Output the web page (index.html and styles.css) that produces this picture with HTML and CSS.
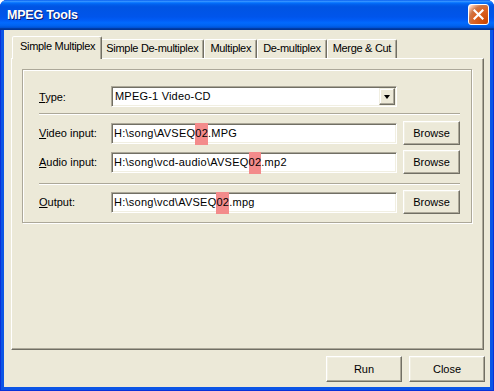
FILE: index.html
```html
<!DOCTYPE html>
<html lang="en">
<head>
    <meta charset="UTF-8">
    <title>MPEG Tools</title>
    <link rel="stylesheet" href="styles.css">
</head>
<body>
    <div class="window">
        <div class="titlebar">
            <span class="title">MPEG Tools</span>
            <span class="close-btn">
                <svg width="11" height="11" viewBox="0 0 11 11">
                    <path d="M1.5 1.5 L9.5 9.5 M9.5 1.5 L1.5 9.5" stroke="#fff" stroke-width="2.2" stroke-linecap="square"/>
                </svg>
            </span>
        </div>

        <div class="client">
            <div class="tabs">
                <div class="tab active">Simple Multiplex</div>
                <div class="tab">Simple De-multiplex</div>
                <div class="tab">Multiplex</div>
                <div class="tab">De-multiplex</div>
                <div class="tab">Merge &amp; Cut</div>
            </div>

            <div class="panel">
                <div class="group">
                    <label class="lbl"><u>T</u>ype:</label>
                    <div class="combo">
                        <span class="combo-text">MPEG-1 Video-CD</span>
                        <span class="drop-btn"><span class="arrow"></span></span>
                    </div>

                    <div class="sep sep-top"></div>

                    <label class="lbl"><u>V</u>ideo input:</label>
                    <div class="field">H:\song\AVSEQ<span class="hl">02</span>.MPG</div>
                    <button class="btn">Browse</button>

                    <label class="lbl row-gap"><u>A</u>udio input:</label>
                    <div class="field row-gap">H:\song\vcd-audio\AVSEQ<span class="hl">02</span>.mp2</div>
                    <button class="btn row-gap">Browse</button>

                    <div class="sep sep-bottom"></div>

                    <label class="lbl"><u>O</u>utput:</label>
                    <div class="field">H:\song\vcd\AVSEQ<span class="hl">02</span>.mpg</div>
                    <button class="btn">Browse</button>
                </div>
            </div>

            <div class="footer">
                <button class="btn btn-wide">Run</button>
                <button class="btn btn-wide">Close</button>
            </div>
        </div>
    </div>
</body>
</html>
```

FILE: styles.css
```css
* { box-sizing: border-box; }
body { margin: 0; background: #fff; font-family: "Liberation Sans", Arial, sans-serif; font-size: 11px; color: #000; }

.window { width: 494px; height: 391px; display: flex; flex-direction: column; background: #0B55E6; border-radius: 7px 7px 0 0; overflow: hidden; box-shadow: inset 1px 0 #0831D9, inset -1px 0 #0831D9, inset 0 -1px #0831D9; }

.titlebar { height: 30px; flex: none; display: flex; align-items: center; justify-content: space-between; padding: 0 5px 1px 7px;
    background: linear-gradient(to bottom, #0058EE 0%, #3A93FF 4%, #288EFF 6%, #127DFF 8%, #036FFC 10%, #0262EE 14%, #0057E5 20%, #0054E3 24%, #0055EB 56%, #005BF5 66%, #026AFE 76%, #0062EF 86%, #0052D6 92%, #0040AB 94%, #003092 100%); }
.title { color: #fff; font-size: 12.5px; font-weight: bold; letter-spacing: -0.2px; text-shadow: 1px 1px 0 #0A1A6E; }
.close-btn { width: 21px; height: 21px; border: 1px solid #fff; border-radius: 3px; display: flex; align-items: center; justify-content: center;
    background: radial-gradient(circle at 90% 90%, #CC4600 0%, #DC6527 55%, #CD7546 70%, #FFCCB2 90%, #fff 100%); }

.client { flex: 1; margin: 0 4px 4px 4px; background: #ECE9D8; display: flex; flex-direction: column; padding: 6px 5px 5px 7px; }

.tabs { display: flex; align-items: flex-end; height: 22px; padding-left: 2px; }
.tab { height: 19px; padding: 0 5px; line-height: 17px; letter-spacing: -0.3px; white-space: nowrap; border: 1px solid; border-bottom: 0; border-color: #fff #716F64 transparent #fff; box-shadow: inset -1px 0 #ACA899; border-radius: 2px 2px 0 0; }
.tab.active { height: 23px; margin: 0 -2px -1px -1px; padding: 0 6px 0 7px; line-height: 19px; position: relative; z-index: 1; background: #ECE9D8; }

.panel { flex: 1; margin-right: 1px; padding: 10px 11px 0 10px; border: 1px solid; border-color: #fff #716F64 #716F64 #fff; box-shadow: inset -1px -1px #ACA899; }

.group { display: grid; grid-template-columns: 66px 286px 57px; column-gap: 6px; align-items: center; padding: 16px 11px 8px 16px; border: 1px solid #ACA899; box-shadow: inset 1px 1px #fff, 1px 1px #fff; }

.lbl { white-space: nowrap; }
.lbl u { text-decoration-thickness: 1px; text-underline-offset: 1px; }

.combo { grid-column: 2 / 4; width: 286px; height: 21px; display: flex; align-items: stretch; background: #fff; border: 1px solid; border-color: #ACA899 #fff #fff #ACA899; box-shadow: inset 1px 1px #716F64, inset -1px -1px #F1EFE2; padding: 1px 1px 1px 3px; }
.combo-text { flex: 1; line-height: 17px; letter-spacing: 0.2px; }
.drop-btn { width: 16px; display: flex; align-items: center; justify-content: center; background: #ECE9D8; border: 1px solid; border-color: #F1EFE2 #716F64 #716F64 #F1EFE2; box-shadow: inset -1px -1px #ACA899, inset 1px 1px #fff; }
.arrow { width: 0; height: 0; border-left: 3.5px solid transparent; border-right: 3.5px solid transparent; border-top: 4px solid #000; }

.sep { grid-column: 1 / -1; height: 2px; border-top: 1px solid #ACA899; border-bottom: 1px solid #fff; }
.sep-top { margin: 6px 0 6px; }
.sep-bottom { margin: 9px 0 5px; }

.field { height: 21px; display: flex; align-items: stretch; white-space: nowrap; letter-spacing: 0.25px; background: #fff; border: 1px solid; border-color: #ACA899 #fff #fff #ACA899; box-shadow: inset 1px 1px #716F64, inset -1px -1px #F1EFE2; padding-left: 2px; line-height: 19px; }
.hl { background: #F38B8B; margin: -1px 0 -2px; line-height: 20px; position: relative; }

.row-gap { margin-top: 5px; }

.btn { height: 24px; padding: 0; font: inherit; color: #000; background: #ECE9D8; border: 1px solid; border-color: #fff #716F64 #716F64 #fff; box-shadow: inset -1px -1px #ACA899, inset 1px 1px #F1EFE2; }

.footer { display: flex; justify-content: flex-end; gap: 7px; margin-top: 6px; }
.btn-wide { width: 76px; height: 26px; }
```
